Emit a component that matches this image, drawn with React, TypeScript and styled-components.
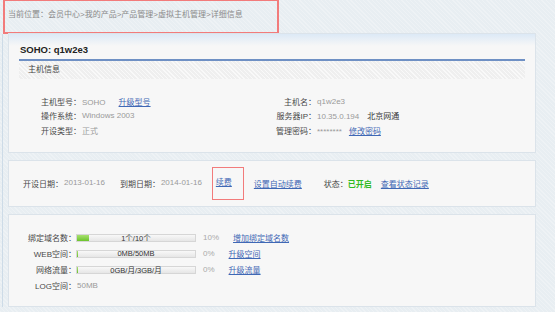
import * as React from 'react';
import styled, { createGlobalStyle } from 'styled-components';

const GlobalStyle = createGlobalStyle`
  html, body {
    margin: 0;
    padding: 0;
    background: #e8eef2;
  }
  body {
    font-family: "Liberation Sans", "Noto Sans CJK SC", sans-serif;
    font-size: 8px;
    color: #555;
  }
`;

const infoLeft = [
  { label: '主机型号：', value: 'SOHO', link: '升级型号' },
  { label: '操作系统：', value: 'Windows 2003' },
  { label: '开设类型：', value: '正式' },
];

const infoRight = [
  { label: '主机名：', value: 'q1w2e3' },
  { label: '服务器IP：', value: '10.35.0.194', extra: '北京网通' },
  { label: '管理密码：', value: '********', link: '修改密码' },
];

const usage = [
  { label: '绑定域名数：', text: '1个/10个', percent: 10, link: '增加绑定域名数' },
  { label: 'WEB空间：', text: '0MB/50MB', percent: 0, link: '升级空间' },
  { label: '网络流量：', text: '0GB/月/3GB/月', percent: 0, link: '升级流量' },
];

export default function App() {
  return (
    <Page>
      <GlobalStyle />
      <Breadcrumb>当前位置：会员中心&gt;我的产品&gt;产品管理&gt;虚拟主机管理&gt;详细信息</Breadcrumb>
      <Frame>
        <Card $top>
          <Title>SOHO: q1w2e3</Title>
          <SubHeader>主机信息</SubHeader>
          <InfoGrid>
            {infoLeft.map((l, i) => {
              const r = infoRight[i];
              return (
                <React.Fragment key={l.label}>
                  <Label>{l.label}</Label>
                  <Value>
                    {l.value}
                    {l.link && <Link $ml={13}>{l.link}</Link>}
                  </Value>
                  <Label>{r.label}</Label>
                  <Value>
                    {r.value}
                    {r.extra && <Strong>{r.extra}</Strong>}
                    {r.link && <Link $ml={7}>{r.link}</Link>}
                  </Value>
                </React.Fragment>
              );
            })}
          </InfoGrid>
        </Card>

        <Card>
          <DateRow>
            <Field>
              <Label>开设日期：</Label>
              <Value>2013-01-16</Value>
            </Field>
            <Field $ml={15}>
              <Label>到期日期：</Label>
              <Value>2014-01-16</Value>
            </Field>
            <Marked>
              <Link>续费</Link>
            </Marked>
            <Link $ml={10}>设置自动续费</Link>
            <Field $ml={22}>
              <Label>状态：</Label>
              <Green>已开启</Green>
            </Field>
            <Link $ml={9}>查看状态记录</Link>
          </DateRow>
        </Card>

        <Card>
          <UsageList>
            {usage.map((u) => (
              <UsageRow key={u.label}>
                <UsageLabel>{u.label}</UsageLabel>
                <Bar>
                  <Fill style={{ width: u.percent ? `${u.percent}%` : '1px' }} />
                  <BarText>{u.text}</BarText>
                </Bar>
                <Percent>{u.percent}%</Percent>
                <Link>{u.link}</Link>
              </UsageRow>
            ))}
            <UsageRow>
              <UsageLabel>LOG空间：</UsageLabel>
              <Value>50MB</Value>
            </UsageRow>
          </UsageList>
        </Card>
      </Frame>
    </Page>
  );
}

const Page = styled.div`
  width: 555px;
  height: 312px;
  overflow: hidden;
  background-color: #e8eef2;
  background-image: repeating-linear-gradient(
    45deg,
    rgba(255, 255, 255, 0.25) 0 1px,
    transparent 1px 3px
  );
`;

const Breadcrumb = styled.div`
  box-sizing: border-box;
  width: 276px;
  height: 34px;
  margin-left: 3px;
  padding: 8px 0 0 3px;
  border: 2px solid #f27b7b;
  border-top-width: 1px;
  color: #8a8a8a;
  line-height: 12px;
`;

const Frame = styled.div`
  margin-left: 2px;
  border-left: 1px solid #cddbe7;
  padding: 0 0 0 5px;
  display: flex;
  flex-direction: column;
  gap: 7px;
`;

const Card = styled.div<{ $top?: boolean }>`
  box-sizing: border-box;
  width: 528px;
  margin-top: ${(p) => (p.$top ? '-1px' : '0')};
  background: ${(p) =>
    p.$top ? 'linear-gradient(#dce9f6 0, #f7f7f7 12px)' : '#f7f7f7'};
  border: 1px solid #dbe3ea;
  padding: 0 10px;
`;

const Title = styled.div`
  font-size: 9.5px;
  font-weight: bold;
  color: #222;
  line-height: 12px;
  padding: 10px 0 3px 1px;
  border-bottom: 2px solid #6f90c4;
`;

const SubHeader = styled.div`
  height: 18px;
  line-height: 18px;
  padding-left: 9px;
  background-color: #efefef;
  background-image: repeating-linear-gradient(
    45deg,
    rgba(255, 255, 255, 0.6) 0 1px,
    transparent 1px 3px
  );
  color: #444;
`;

const InfoGrid = styled.div`
  display: grid;
  grid-template-columns: 62px 166px 69px 1fr;
  grid-auto-rows: 14.5px;
  align-items: center;
  padding: 15px 0 14px;
  & > span:nth-child(odd) {
    text-align: right;
  }
`;

const Label = styled.span`
  color: #484848;
  white-space: nowrap;
`;

const Value = styled.span`
  color: #9a9a9a;
  white-space: nowrap;
  padding-left: 1px;
`;

const Strong = styled.span`
  color: #333;
  margin-left: 8px;
`;

const Link = styled.a<{ $ml?: number }>`
  color: #3f68b5;
  text-decoration: underline;
  white-space: nowrap;
  margin-left: ${(p) => p.$ml ?? 0}px;
  cursor: pointer;
`;

const Green = styled.span`
  color: #2fbb22;
  font-weight: bold;
`;

const DateRow = styled.div`
  display: flex;
  align-items: center;
  height: 45px;
  padding-left: 4px;
`;

const Field = styled.span<{ $ml?: number }>`
  display: inline-flex;
  white-space: nowrap;
  margin-left: ${(p) => p.$ml ?? 0}px;
`;

const Marked = styled.span`
  box-sizing: border-box;
  display: inline-flex;
  align-items: center;
  width: 32px;
  height: 33px;
  margin-left: 10px;
  padding: 0 0 4px 3px;
  border: 1.5px solid #f27b7b;
`;

const UsageList = styled.div`
  display: flex;
  flex-direction: column;
  padding: 15px 0 12px;
`;

const UsageRow = styled.div`
  display: flex;
  align-items: center;
  height: 16px;
`;

const UsageLabel = styled.span`
  width: 57px;
  text-align: right;
  color: #484848;
  white-space: nowrap;
`;

const Bar = styled.div`
  position: relative;
  box-sizing: border-box;
  width: 120px;
  height: 8px;
  margin-left: 0;
  border: 1px solid #d6d6d6;
  background: linear-gradient(#f8f8f8, #e6e6e6);
`;

const Fill = styled.div`
  height: 100%;
  background: linear-gradient(#a8e070, #6cc42c);
`;

const BarText = styled.span`
  position: absolute;
  inset: 0;
  display: flex;
  align-items: center;
  justify-content: center;
  font-size: 7.5px;
  color: #333;
  white-space: nowrap;
`;

const Percent = styled.span`
  color: #aaa;
  margin: 0 14px 0 7px;
`;
